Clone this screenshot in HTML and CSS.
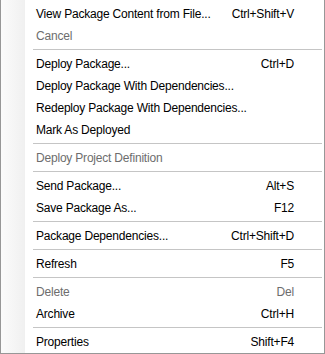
FILE: index.html
```html
<!DOCTYPE html>
<html lang="en">

<head>
    <meta charset="UTF-8">
    <meta name="viewport" content="width=device-width, initial-scale=1.0">
    <title>Package Menu</title>
    <link rel="stylesheet" href="styles.css">
</head>

<body>
    <ul class="menu">
        <li class="item"><span>View Package Content from File...</span><span class="key">Ctrl+Shift+V</span></li>
        <li class="item disabled"><span>Cancel</span></li>
        <li class="sep"></li>
        <li class="item"><span>Deploy Package...</span><span class="key">Ctrl+D</span></li>
        <li class="item"><span>Deploy Package With Dependencies...</span></li>
        <li class="item"><span>Redeploy Package With Dependencies...</span></li>
        <li class="item"><span>Mark As Deployed</span></li>
        <li class="sep"></li>
        <li class="item disabled"><span>Deploy Project Definition</span></li>
        <li class="sep"></li>
        <li class="item"><span>Send Package...</span><span class="key">Alt+S</span></li>
        <li class="item"><span>Save Package As...</span><span class="key">F12</span></li>
        <li class="sep"></li>
        <li class="item"><span>Package Dependencies...</span><span class="key">Ctrl+Shift+D</span></li>
        <li class="sep"></li>
        <li class="item"><span>Refresh</span><span class="key">F5</span></li>
        <li class="sep"></li>
        <li class="item disabled"><span>Delete</span><span class="key">Del</span></li>
        <li class="item"><span>Archive</span><span class="key">Ctrl+H</span></li>
        <li class="sep"></li>
        <li class="item"><span>Properties</span><span class="key">Shift+F4</span></li>
    </ul>
</body>

</html>
```

FILE: styles.css
```css
* {
    margin: 0;
    padding: 0;
    box-sizing: border-box;
}

body {
    font-family: "Liberation Sans", Arial, sans-serif;
    font-size: 12px;
    letter-spacing: -0.2px;
    background-color: #fff;
}

.menu {
    list-style: none;
    width: 325px;
    height: 354px;
    padding-top: 3px;
    border: 1px solid #979797;
    border-top: none;
    background: linear-gradient(to right, #fbfbfb, #f0f0f0) no-repeat 0 0 / 24px 100%, #fff;
}

.item {
    display: flex;
    justify-content: space-between;
    align-items: center;
    height: 22px;
    padding: 0 30px 0 35px;
    color: #000;
}

.item.disabled {
    color: #6d6d6d;
}

.sep {
    height: 1px;
    margin: 2px 2px 3px 32px;
    background-color: #c5c5c5;
}
```
